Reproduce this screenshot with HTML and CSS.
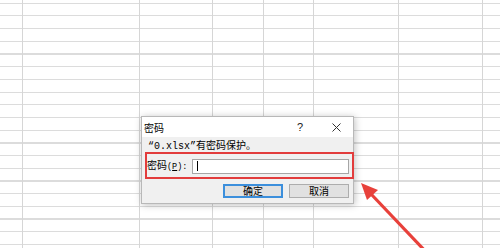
FILE: index.html
```html
<!DOCTYPE html>
<html lang="zh-CN">
<head>
<meta charset="utf-8">
<title>密码</title>
<link rel="stylesheet" href="styles.css">
</head>
<body>
<div class="sheet">
  <div class="col c1"></div>
  <div class="col c2"></div>
  <div class="col c3"></div>
  <div class="col c4"></div>
  <div class="col c5"></div>
  <div class="col c6"></div>
  <div class="col c7"></div>
  <div class="col c8"></div>
</div>

<div class="dialog">
  <div class="titlebar">
    <span class="title">密码</span>
    <span class="help">?</span>
    <span class="close">
      <svg width="9" height="9" viewBox="0 0 9 9"><path d="M0.5 0.5 L8.5 8.5 M8.5 0.5 L0.5 8.5" stroke="#333" stroke-width="1" fill="none"/></svg>
    </span>
  </div>
  <div class="body">
    <p class="msg"><span class="mono">“0.xlsx”</span>有密码保护。</p>
    <div class="pwrow">
      <label class="pwlabel">密码<span class="mono small">(<u>P</u>):</span></label>
      <div class="input"><span class="caret"></span></div>
    </div>
    <div class="buttons">
      <button class="btn default">确定</button>
      <button class="btn">取消</button>
    </div>
  </div>
</div>

<svg class="arrow" width="500" height="248" viewBox="0 0 500 248">
  <line x1="371" y1="194" x2="428" y2="254" stroke="#e8413b" stroke-width="3.2"/>
  <polygon points="361,183 378,190 367,200" fill="#e8413b"/>
</svg>
</body>
</html>
```

FILE: styles.css
```css
html, body {
  margin: 0;
  padding: 0;
}
body {
  width: 500px;
  height: 248px;
  overflow: hidden;
  position: relative;
  background: #ffffff;
  font-family: "Noto Sans CJK SC", "Noto Sans", sans-serif;
  font-size: 10px;
  color: #000;
}

.sheet {
  display: grid;
  grid-template-columns: 23px 117px 73px 51px 50px 85px 84px 17px;
  height: 248px;
  background-image: repeating-linear-gradient(180deg,
    transparent 0 2.6px,
    #dcdcdc 2.6px 3.8px,
    transparent 3.8px 12.7px);
}
.col {
  border-right: 1px solid #d6d6d6;
}
.col.c8 {
  border-right: none;
}

.dialog {
  position: absolute;
  left: 141px;
  top: 116px;
  width: 213px;
  box-sizing: border-box;
  border: 1px solid #b8b8b8;
  background: #f0f0f0;
  box-shadow: 1px 1px 7px rgba(0, 0, 0, 0.25);
}

.titlebar {
  height: 20px;
  background: #ffffff;
  display: flex;
  align-items: center;
}
.title {
  padding-left: 2px;
  font-size: 10px;
}
.help {
  margin-left: auto;
  width: 24px;
  text-align: center;
  font-family: "Liberation Sans", sans-serif;
  font-size: 11px;
  color: #222;
}
.close {
  width: 28px;
  margin-left: 10px;
  margin-right: 3px;
  display: flex;
  justify-content: center;
  align-items: center;
}
.close svg {
  display: block;
}

.body {
  padding: 1px 0 5px;
}
.msg {
  margin: 0;
  height: 14px;
  line-height: 14px;
  padding-left: 6px;
  white-space: nowrap;
}
.mono {
  font-family: "Liberation Mono", monospace;
  font-size: 10px;
}
.mono.small {
  font-size: 8.5px;
}

.pwrow {
  margin-left: 3px;
  margin-right: -1px;
  height: 27px;
  box-sizing: border-box;
  border: 2px solid #e23c3c;
  display: flex;
  align-items: center;
}
.pwlabel {
  width: 45px;
  white-space: nowrap;
  line-height: 14px;
}
.input {
  width: 157px;
  height: 15px;
  box-sizing: border-box;
  border: 1px solid #a6a6a6;
  background: #ffffff;
  margin-top: 1px;
  display: flex;
  align-items: center;
  padding-left: 4px;
}
.caret {
  width: 1px;
  height: 10px;
  background: #000;
}

.buttons {
  margin-top: 5px;
  display: flex;
  justify-content: flex-end;
  gap: 6px;
  padding-right: 4px;
}
.btn {
  width: 60px;
  height: 14px;
  box-sizing: border-box;
  padding: 0;
  margin: 0;
  border: 1px solid #adadad;
  background: #e1e1e1;
  font-family: "Noto Sans CJK SC", sans-serif;
  font-size: 10px;
  line-height: 12px;
  color: #000;
}
.btn.default {
  border: 2px solid #3c8fdc;
  line-height: 10px;
}

.arrow {
  position: absolute;
  left: 0;
  top: 0;
  pointer-events: none;
}
```
